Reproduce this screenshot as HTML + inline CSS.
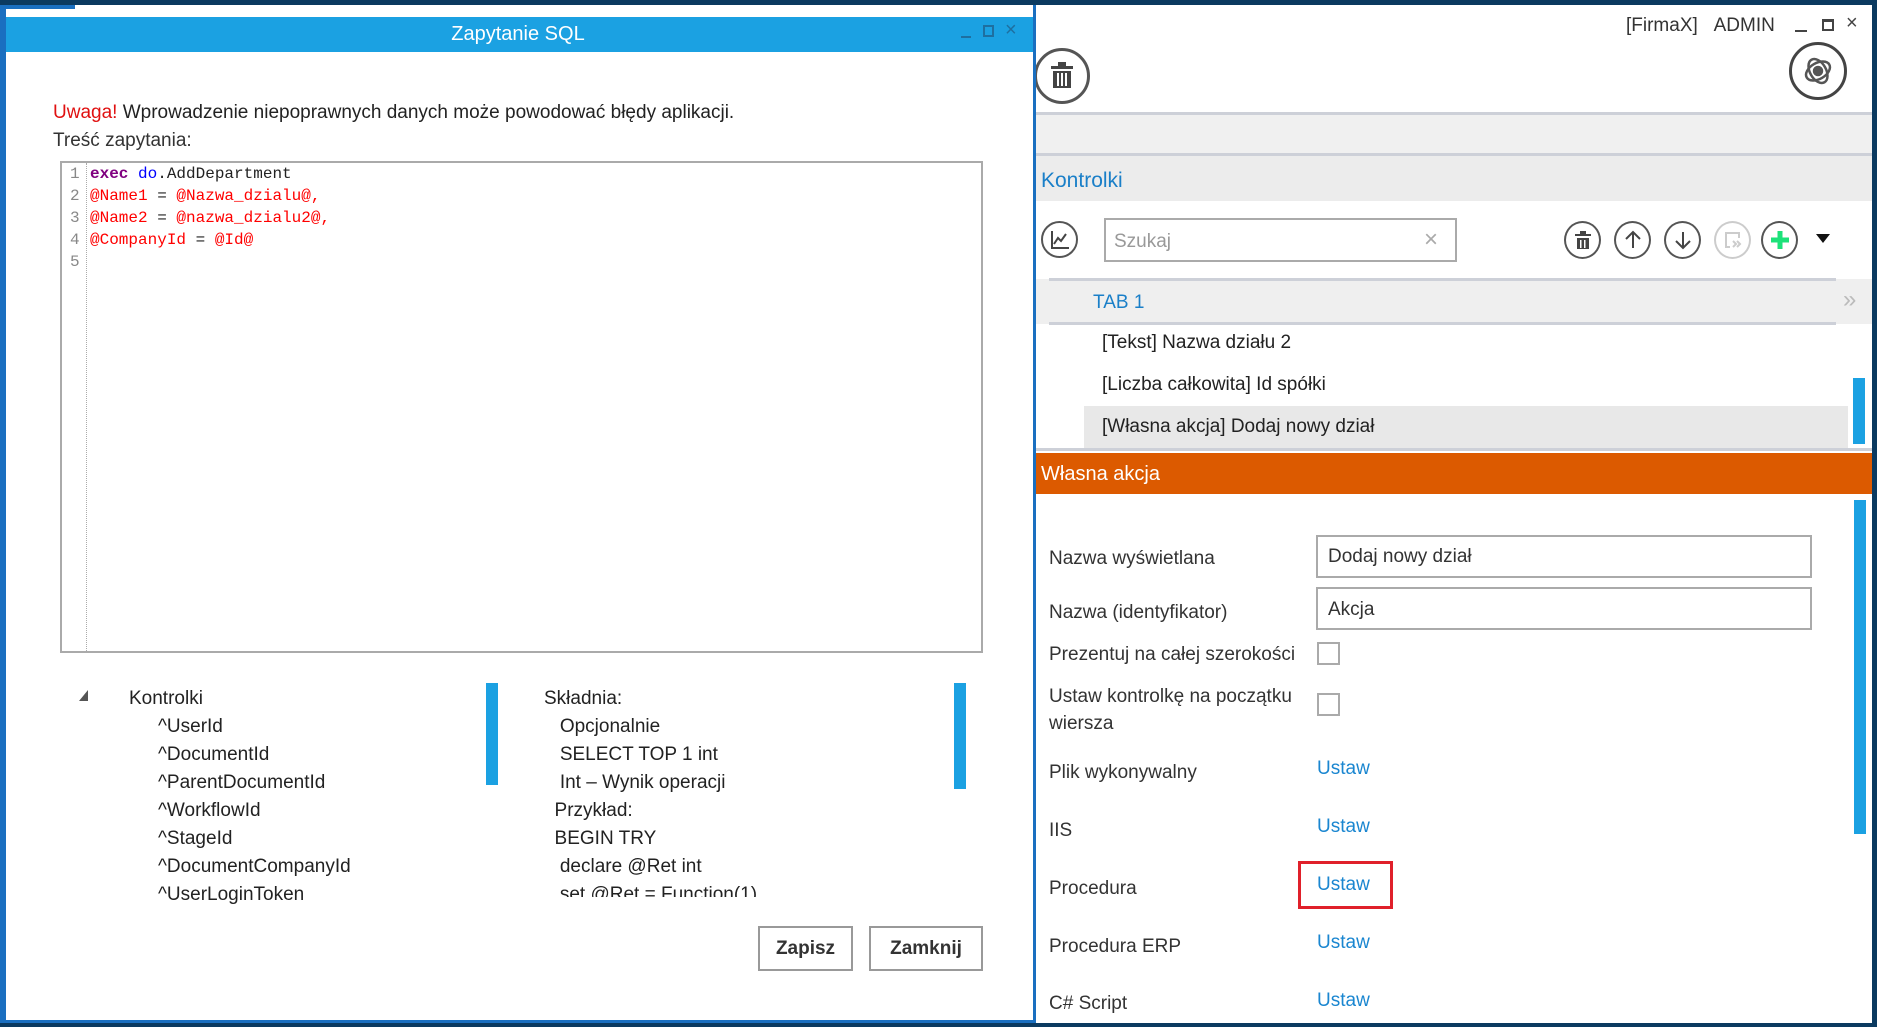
<!DOCTYPE html>
<html><head><meta charset="utf-8"><style>
*{margin:0;padding:0;box-sizing:border-box}
body{width:1877px;height:1027px;position:relative;overflow:hidden;background:#fff;font-family:"Liberation Sans",sans-serif;color:#222}
.a{position:absolute;white-space:nowrap}
.t{font-size:19px;line-height:24px}
.m{font-family:"Liberation Mono",monospace;font-size:16px;line-height:22px}
.lbl{font-size:19px;line-height:24px;color:#333}
.u{font-size:19px;line-height:24px;color:#1a86d0}
.c{position:absolute;border:2px solid #555;border-radius:50%;background:#fff}
</style></head><body>
<div class="a" style="left:0;top:0;width:1877px;height:5px;background:#0b3a60"></div>
<div class="a" style="left:1872px;top:0;width:5px;height:1027px;background:#0b3a60"></div>
<div class="a" style="left:0;top:1023px;width:1877px;height:4px;background:#0b3a60"></div>

<div class="a" style="left:1036px;top:5px;width:836px;height:1018px;background:#fff"></div>
<div class="a t" style="left:1626px;top:14px;color:#333">[FirmaX]&nbsp;&nbsp;&nbsp;ADMIN</div>
<div class="a" style="left:1795px;top:30px;width:12px;height:2px;background:#444"></div>
<div class="a" style="left:1822px;top:19px;width:12px;height:12px;border:2px solid #444;border-top-width:3px"></div>
<div class="a" style="left:1846px;top:12px;font-size:20px;color:#444">×</div>
<div class="c" style="left:1034px;top:48px;width:56px;height:56px;border-width:3px"></div>
<svg class="a" style="left:1048px;top:60px" width="28" height="30" viewBox="0 0 28 30"><rect x="3" y="6" width="22" height="3" fill="#444"/><rect x="10" y="2" width="8" height="4" fill="#444"/><rect x="5" y="11" width="18" height="17" fill="#444"/><rect x="9" y="13" width="2" height="13" fill="#fff"/><rect x="13" y="13" width="2" height="13" fill="#fff"/><rect x="17" y="13" width="2" height="13" fill="#fff"/></svg>
<div class="c" style="left:1789px;top:42px;width:58px;height:58px;border-width:3px;border-color:#444"></div>
<svg class="a" style="left:1800px;top:53px" width="36" height="36" viewBox="0 0 36 36" fill="none" stroke="#555" stroke-width="2.5"><ellipse cx="18" cy="18" rx="13" ry="8" transform="rotate(-30 18 18)"/><ellipse cx="18" cy="18" rx="8" ry="13" transform="rotate(-30 18 18)"/><circle cx="18" cy="18" r="4" fill="#555"/></svg>

<div class="a" style="left:1036px;top:112px;width:836px;height:44px;background:#f0f0f0;border-top:3px solid #cdd0d8;border-bottom:3px solid #cdd0d8"></div>
<div class="a" style="left:1036px;top:156px;width:836px;height:45px;background:#ececec"></div>
<div class="a" style="left:1041px;top:168px;font-size:21px;line-height:26px;color:#1a7fc8">Kontrolki</div>

<div class="c" style="left:1041px;top:221px;width:37px;height:37px"></div>
<svg class="a" style="left:1049px;top:229px" width="22" height="22" viewBox="0 0 22 22" fill="none" stroke="#444" stroke-width="2"><path d="M3 2V19H20"/><path d="M5 15L9 9L12 12L17 5"/></svg>
<div class="a" style="left:1104px;top:218px;width:353px;height:44px;border:2px solid #aaa;background:#fff"></div>
<div class="a t" style="left:1114px;top:230px;color:#999">Szukaj</div>
<div class="a" style="left:1424px;top:226px;font-size:24px;color:#aaa">×</div>

<div class="c" style="left:1564px;top:221px;width:37px;height:38px"></div>
<svg class="a" style="left:1572px;top:230px" width="22" height="20" viewBox="0 0 22 20"><rect x="3" y="4" width="16" height="2" fill="#444"/><rect x="8" y="1" width="6" height="3" fill="#444"/><rect x="5" y="8" width="12" height="11" fill="#444"/><rect x="8" y="10" width="1.5" height="8" fill="#fff"/><rect x="12" y="10" width="1.5" height="8" fill="#fff"/></svg>
<div class="c" style="left:1614px;top:221px;width:37px;height:38px"></div>
<svg class="a" style="left:1622px;top:229px" width="22" height="22" viewBox="0 0 22 22" fill="none" stroke="#444" stroke-width="2"><path d="M11 19V3M4 10L11 3L18 10"/></svg>
<div class="c" style="left:1664px;top:221px;width:37px;height:38px"></div>
<svg class="a" style="left:1672px;top:229px" width="22" height="22" viewBox="0 0 22 22" fill="none" stroke="#444" stroke-width="2"><path d="M11 3V19M4 12L11 19L18 12"/></svg>
<div class="c" style="left:1714px;top:221px;width:37px;height:38px;border-color:#ccc"></div>
<svg class="a" style="left:1722px;top:229px" width="22" height="22" viewBox="0 0 22 22" fill="none" stroke="#ccc" stroke-width="2"><path d="M8 18H4V4H17V9"/><path d="M11 12L14 15L11 18M15 12L18 15L15 18"/></svg>
<div class="c" style="left:1761px;top:221px;width:37px;height:38px"></div>
<svg class="a" style="left:1769px;top:229px" width="22" height="22" viewBox="0 0 22 22"><rect x="8.5" y="2" width="5" height="18" fill="#1de27a"/><rect x="2" y="8.5" width="18" height="5" fill="#1de27a"/></svg>
<svg class="a" style="left:1816px;top:234px" width="14" height="10"><path d="M0 0H14L7 9Z" fill="#111"/></svg>

<div class="a" style="left:1036px;top:279px;width:836px;height:45px;background:#efefef"></div>
<div class="a" style="left:1049px;top:278px;width:787px;height:3px;background:#cdd0d8"></div>
<div class="a" style="left:1049px;top:322px;width:787px;height:3px;background:#cdd0d8"></div>
<div class="a" style="left:1093px;top:290px;font-size:19px;line-height:26px;color:#1a7fc8">TAB 1</div>
<div class="a" style="left:1843px;top:286px;font-size:24px;color:#bbb">»</div>
<div class="a t" style="left:1102px;top:331px">[Tekst] Nazwa działu 2</div>
<div class="a t" style="left:1102px;top:373px">[Liczba całkowita] Id spółki</div>
<div class="a" style="left:1084px;top:406px;width:764px;height:42px;background:#e8e8e8"></div>
<div class="a t" style="left:1102px;top:415px">[Własna akcja] Dodaj nowy dział</div>
<div class="a" style="left:1853px;top:378px;width:12px;height:66px;background:#1ba1e2"></div>
<div class="a" style="left:1036px;top:448px;width:836px;height:3px;background:#cdd0d8"></div>
<div class="a" style="left:1036px;top:453px;width:836px;height:41px;background:#dc5a00"></div>
<div class="a" style="left:1041px;top:462px;font-size:20px;line-height:24px;color:#fff">Własna akcja</div>

<div class="a" style="left:1854px;top:500px;width:12px;height:334px;background:#1ba1e2"></div>
<div class="a lbl" style="left:1049px;top:547px">Nazwa wyświetlana</div>
<div class="a" style="left:1316px;top:535px;width:496px;height:43px;border:2px solid #aaa"></div>
<div class="a t" style="left:1328px;top:545px;color:#333">Dodaj nowy dział</div>
<div class="a lbl" style="left:1049px;top:601px">Nazwa (identyfikator)</div>
<div class="a" style="left:1316px;top:587px;width:496px;height:43px;border:2px solid #aaa"></div>
<div class="a t" style="left:1328px;top:598px;color:#333">Akcja</div>
<div class="a lbl" style="left:1049px;top:643px">Prezentuj na całej szerokości</div>
<div class="a" style="left:1317px;top:642px;width:23px;height:23px;border:2px solid #aaa"></div>
<div class="a lbl" style="left:1049px;top:685px">Ustaw kontrolkę na początku</div>
<div class="a lbl" style="left:1049px;top:712px">wiersza</div>
<div class="a" style="left:1317px;top:693px;width:23px;height:23px;border:2px solid #aaa"></div>
<div class="a lbl" style="left:1049px;top:761px">Plik wykonywalny</div>
<div class="a u" style="left:1317px;top:757px">Ustaw</div>
<div class="a lbl" style="left:1049px;top:819px">IIS</div>
<div class="a u" style="left:1317px;top:815px">Ustaw</div>
<div class="a lbl" style="left:1049px;top:877px">Procedura</div>
<div class="a u" style="left:1317px;top:873px">Ustaw</div>
<div class="a" style="left:1298px;top:861px;width:95px;height:48px;border:3px solid #e0202a"></div>
<div class="a lbl" style="left:1049px;top:935px">Procedura ERP</div>
<div class="a u" style="left:1317px;top:931px">Ustaw</div>
<div class="a lbl" style="left:1049px;top:992px">C# Script</div>
<div class="a u" style="left:1317px;top:989px">Ustaw</div>

<div class="a" style="left:0;top:5px;width:1036px;height:1018px;background:#fff;border:3px solid #1a6fc0;border-left-width:6px;border-top:none"></div>
<div class="a" style="left:0;top:5px;width:75px;height:4px;background:#1a6fc0"></div>
<div class="a" style="left:6px;top:17px;width:1027px;height:35px;background:#1ba1e2"></div>
<div class="a" style="left:0;top:17px;width:1036px;text-align:center;font-size:20px;line-height:35px;color:#fff">Zapytanie SQL</div>
<div class="a" style="left:961px;top:36px;width:10px;height:2px;background:#1e6fa0"></div>
<div class="a" style="left:983px;top:25px;width:11px;height:12px;border:2px solid #1e6fa0"></div>
<div class="a" style="left:1005px;top:19px;font-size:20px;color:#1e6fa0">×</div>
<div class="a t" style="left:53px;top:101px"><span style="color:#e01010">Uwaga!</span> Wprowadzenie niepoprawnych danych może powodować błędy aplikacji.</div>
<div class="a t" style="left:53px;top:129px;color:#333">Treść zapytania:</div>
<div class="a" style="left:60px;top:161px;width:923px;height:492px;border:2px solid #aaa"></div>
<div class="a" style="left:86px;top:163px;width:0;height:488px;border-left:1px dotted #aaa"></div>
<div class="a m" style="left:70px;top:163px;color:#888;line-height:22px">1<br>2<br>3<br>4<br>5</div>
<div class="a m" style="left:90px;top:163px;line-height:22px"><span style="color:#800080;font-weight:bold">exec</span> <span style="color:#0000ff">do</span>.AddDepartment<br><span style="color:#f00">@Name1</span> = <span style="color:#f00">@Nazwa_dzialu@,</span><br><span style="color:#f00">@Name2</span> = <span style="color:#f00">@nazwa_dzialu2@,</span><br><span style="color:#f00">@CompanyId</span> = <span style="color:#f00">@Id@</span></div>

<svg class="a" style="left:79px;top:690px" width="10" height="12"><path d="M9 0V11H0Z" fill="#555"/></svg>
<div class="a t" style="left:129px;top:685px;line-height:28px;color:#222">Kontrolki</div>
<div class="a t" style="left:158px;top:713px;line-height:28px;color:#222">^UserId<br>^DocumentId<br>^ParentDocumentId<br>^WorkflowId<br>^StageId<br>^DocumentCompanyId<br>^UserLoginToken</div>
<div class="a" style="left:486px;top:683px;width:12px;height:102px;background:#1ba1e2"></div>
<div class="a" style="left:544px;top:680px;width:400px;height:217px;overflow:hidden">
<div class="t" style="line-height:28px;color:#222;padding-top:5px;white-space:pre">Składnia:
   Opcjonalnie
   SELECT TOP 1 int
   Int – Wynik operacji
  Przykład:
  BEGIN TRY
   declare @Ret int
   set @Ret = Function(1)</div></div>
<div class="a" style="left:954px;top:683px;width:12px;height:106px;background:#1ba1e2"></div>
<div class="a" style="left:758px;top:926px;width:95px;height:45px;border:2px solid #999;text-align:center;font-size:19px;line-height:41px;font-weight:bold;color:#333">Zapisz</div>
<div class="a" style="left:869px;top:926px;width:114px;height:45px;border:2px solid #999;text-align:center;font-size:19px;line-height:41px;font-weight:bold;color:#333">Zamknij</div>
</body></html>
